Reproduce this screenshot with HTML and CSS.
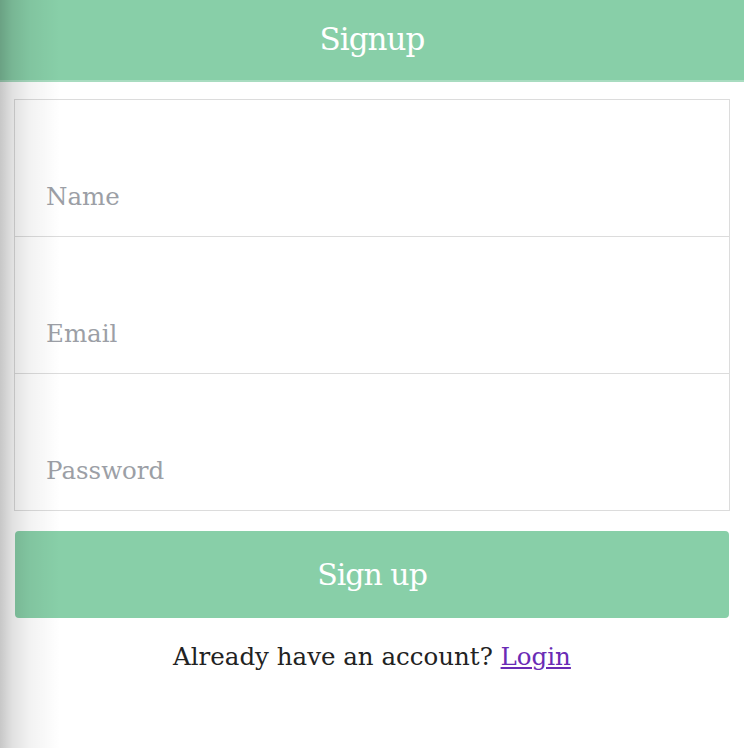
FILE: index.html
```html
<!DOCTYPE html>
<html>
<head>
<meta charset="utf-8">
<link rel="stylesheet" href="styles.css">
</head>
<body>
<div class="page">
  <header class="topbar">Signup</header>
  <form class="form">
    <div class="fields">
      <input class="field" type="text" placeholder="Name">
      <input class="field" type="email" placeholder="Email">
      <input class="field" type="password" placeholder="Password">
    </div>
    <button class="submit" type="button">Sign up</button>
    <p class="alt">Already have an account? <a href="#">Login</a></p>
  </form>
  <div class="edge-shade"></div>
</div>
</body>
</html>
```

FILE: styles.css
```css
html, body {
  margin: 0;
  padding: 0;
  background: #fff;
}
.page {
  position: relative;
  width: 744px;
  height: 748px;
  overflow: hidden;
  font-family: "DejaVu Serif", "Liberation Serif", serif;
}
.topbar {
  height: 78px;
  padding-bottom: 2px;
  background: #88cfa8;
  border-bottom: 2px solid #a8dcc0;
  color: #fff;
  font-size: 31px;
  display: flex;
  align-items: center;
  justify-content: center;
  letter-spacing: -1px;
}
.form {
  padding: 17px 14px 0 14px;
  margin: 0;
}
.fields {
  display: flex;
  flex-direction: column;
  border: 1px solid #dcdcdc;
}
.field {
  height: 137px;
  box-sizing: border-box;
  border: none;
  border-bottom: 1px solid #dcdcdc;
  padding: 57px 0 0 31px;
  font-family: inherit;
  font-size: 24.5px;
  color: #333;
  outline: none;
  background: transparent;
}
.field:last-child {
  border-bottom: none;
  height: 136px;
}
.field::placeholder {
  color: #9c9fa6;
}
.submit {
  display: block;
  width: calc(100% - 2px);
  margin: 20px 1px 0 1px;
  height: 87px;
  background: #88cfa8;
  border: none;
  border-radius: 4px;
  color: #fff;
  font-family: inherit;
  font-size: 30px;
  letter-spacing: -1px;
}
.alt {
  text-align: center;
  margin: 24px 0 0 0;
  font-size: 24.5px;
  color: #222;
}
.alt a {
  color: #6a2bb5;
}
.edge-shade {
  position: absolute;
  left: 0;
  top: 0;
  bottom: 0;
  width: 60px;
  pointer-events: none;
  background: linear-gradient(to right, rgba(0,0,0,0.22) 0px, rgba(0,0,0,0.12) 12px, rgba(0,0,0,0.05) 30px, rgba(0,0,0,0) 60px);
}
```
